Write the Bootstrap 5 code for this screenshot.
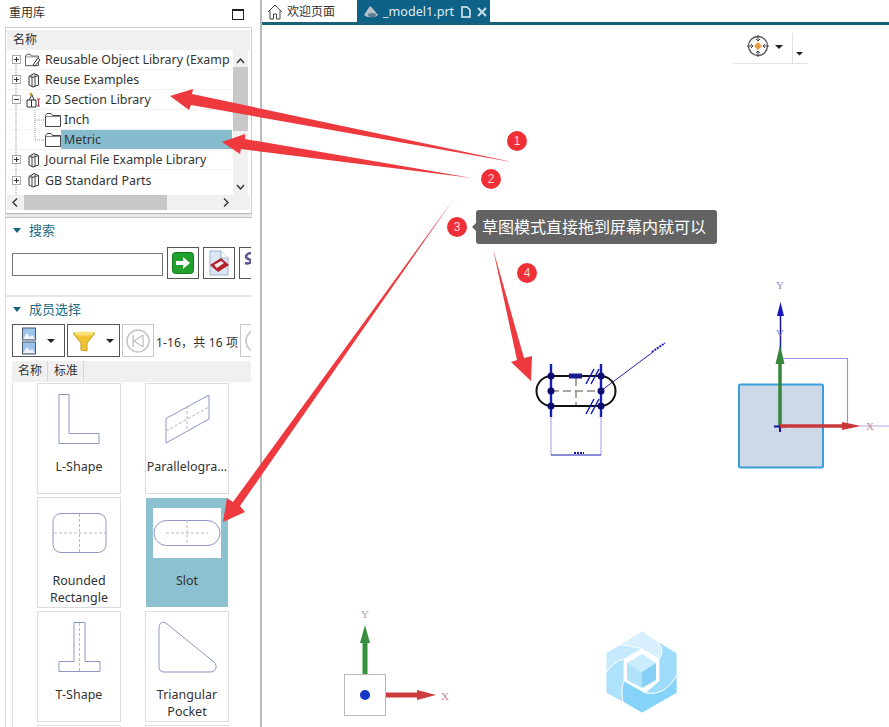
<!DOCTYPE html>
<html lang="zh">
<head>
<meta charset="utf-8">
<title>重用库</title>
<link rel="stylesheet" href="https://cdn.jsdelivr.net/npm/bootstrap@5.3.0/dist/css/bootstrap.min.css">
<style>
html,body{margin:0;height:100%;background:#fff;overflow:hidden}
body{font-family:"Noto Sans","Noto Sans CJK SC",sans-serif;font-size:12px;line-height:20px;color:#333}
.shell{width:889px;height:727px;overflow:hidden;position:relative}
.side{width:260px;height:727px;flex:none;overflow:hidden}
.side-title{height:27px;padding:3px 16px 0 9px}
.max-box{width:12px;height:11px;border:1px solid #222;border-top-width:2px;margin-top:6px}
.tree-wrap{margin-left:5px;width:247px;border:1px solid #d0d0d0;border-bottom:0;height:186px;background:#fff}
.tree-head{height:20px;margin:2px 1px 0;background:#f0f0f0;padding-left:6px;line-height:19px}
.tree-rows{width:226px;height:145px;overflow:hidden;position:relative}
.tree-row{height:20px;border-bottom:1px solid #f2f2f2;white-space:nowrap;line-height:19px;padding:0;border-left:0;border-right:0;border-top:0;background:transparent;color:#333;font-size:12.4px;overflow:hidden}
.tree-row svg{flex:none}
.tree-expander{margin:0 4px 0 6px;z-index:1}
.tree-child{padding-left:39px}
.tree-pick{background:#86bccd;height:20px;padding-left:3px;line-height:19px}
.vbar{width:15px;height:145px;background:#f0f0f0;margin-left:1px}
.vthumb{height:64px;background:#c8c8c8;margin-top:2px}
.hbar{height:15px;margin:0 1px;background:#f0f0f0}
.hthumb{width:143px;height:15px;background:#c8c8c8}
.hchev-end{margin-right:16px}
.gutter{margin-left:5px;height:5px;width:247px;background:#e8e8e8;border-top:1px solid #b8b8b8;border-bottom:1px solid #c4c4c4}
.sect{margin-left:5px;border-left:1px solid #e0e0e0;width:246px;overflow:hidden}
.sect-title{color:#1b6b85;font-size:13px;line-height:18px;gap:8px;padding-left:7px}
.tri{width:0;height:0;border-left:4px solid transparent;border-right:4px solid transparent;border-top:5px solid #14627f}
.search-box{height:79px;padding-top:3px;border-bottom:2px solid #e6e6e6}
.search-row{padding-left:6px;gap:4px;margin-top:8px}
.search-in{width:151px;height:23px;border:1px solid #777;background:#fff;margin-top:6px;flex:none}
.tool-btn{width:32px;height:32px;padding:0;border:1px solid #555;border-radius:0;background:#fff;flex:none;display:flex;align-items:center;justify-content:center}
.tool-off{border-color:#c8c8c8;height:33px}
.tool-clip{justify-content:flex-start;padding-left:4px}
.drop{height:33px;width:53px;padding:0;border:1px solid #555;border-radius:0;background:#fff;flex:none;display:flex;align-items:center;justify-content:center;gap:11px}
.caret-dn{width:0;height:0;border-left:4px solid transparent;border-right:4px solid transparent;border-top:4px solid #222}
.member-sect{height:431px}
.member-title{margin-top:3px}
.member-bar{padding-left:6px;gap:2px;margin-top:6px}
.page-count{margin-top:5px;letter-spacing:.15px}
.mem-tabs{margin-left:6px;height:21px;background:#f0f0f0;margin-top:4px}
.mem-tab{width:36px;text-align:center;border-right:1px solid #d8d8d8;line-height:20px;padding-left:1px}
.mem-grid{margin-left:6px;margin-top:1px;border-left:1px solid #ddd;padding-left:24px;display:grid;grid-template-columns:84px 84px;column-gap:24px;row-gap:3px}
.part-card{height:111px;border:1px solid #ddd;border-radius:0;text-align:center;line-height:17px;font-size:12.5px;background:#fff;overflow:hidden;color:#333;display:block}
.part-card svg{display:block;margin:0 auto}
.part-on{background:#8bc1d1;border-color:#fff}
.main-pane{border-left:2px solid #bbb;height:727px;min-width:0}
.tab-strip{height:23px}
.home-tab{padding-left:5px;width:95px;gap:4px}
.active-tab{width:133px;background:#0e6187;color:#dfeef5;font-size:12.6px;padding-left:6px}
.tab-name{margin-left:4px}
.tab-doc{margin-left:7px}
.tab-close{margin-left:6px}
.strip-line{height:3px;background:#1b6079;margin-top:-1px}
.overlay{position:absolute;left:0;top:0;pointer-events:none}
.pin{position:absolute;width:20px;height:20px;background:#ee2f35;color:#fbd6d6;line-height:20px;text-align:center;font-size:12px;font-family:"Liberation Sans",sans-serif}
.pin-a{left:507px;top:131px}.pin-b{left:481px;top:169px}.pin-c{left:447px;top:217px}.pin-d{left:517px;top:263px}
.tip{position:absolute;left:476px;top:210px;width:241px;height:34px;background:#636363;color:#fff;font-size:16px;line-height:34px;padding-left:6px;border-radius:3px;white-space:nowrap}
.tip::before{content:"";position:absolute;left:-4px;top:13px;border-top:4px solid transparent;border-bottom:4px solid transparent;border-right:4px solid #636363}
.axis-label{font-family:"Liberation Serif",serif;font-size:11px}
.defs-holder{position:absolute}
</style>
</head>
<body>
<svg width="0" height="0" class="defs-holder">
<defs>
<symbol id="plus" viewBox="0 0 9 9"><rect x=".5" y=".5" width="8" height="8" fill="#fff" stroke="#aaa"/><path d="M2 4.500h5M4.500 2v5" stroke="#333"/></symbol>
<symbol id="minus" viewBox="0 0 9 9"><rect x=".5" y=".5" width="8" height="8" fill="#fff" stroke="#aaa"/><path d="M2 4.500h5" stroke="#333"/></symbol>
<symbol id="folder" viewBox="0 0 16 14"><path d="M.5 13.500V2.500L2 .5h4l1.500 2h8v11z" fill="#fff" stroke="#444"/><path d="M.5 3.500h15" stroke="#888"/></symbol>
<symbol id="book" viewBox="0 0 13 16"><path d="M2 4.500 7 1.500l4.500 2v9.500L6 15l-4-2z" fill="#fff" stroke="#333"/><path d="M5 3.500v11M8 2.500v11.500M2 4.500l3.500 1 6-2" fill="none" stroke="#444"/></symbol>
</defs>
</svg>
<div class="shell d-flex">
  <aside class="side">
    <div class="side-title d-flex justify-content-between"><span>重用库</span><span class="max-box"></span></div>
    <div class="tree-wrap">
      <div class="tree-head">名称</div>
      <div class="d-flex">
        <div class="tree-rows list-group list-group-flush rounded-0">
          <svg class="overlay" width="40" height="145"><path d="M10 10V145M29 60V90H38" stroke="#999" stroke-dasharray="1 1" fill="none"/><path d="M29 70H38" stroke="#999" stroke-dasharray="1 1"/></svg>
          <div class="tree-row d-flex align-items-center list-group-item"><svg width="9" height="9" class="tree-expander"><use href="#plus"/></svg><svg width="16" height="16"><use href="#folder" width="14" height="14" y="1"/><path d="M8 13l5-7 2 2-5 6z" fill="#fff" stroke="#333"/></svg><span class="ms-1">Reusable Object Library (Examp</span></div>
          <div class="tree-row d-flex align-items-center list-group-item"><svg width="9" height="9" class="tree-expander"><use href="#plus"/></svg><svg width="16" height="16"><use href="#book" x="2" width="13" height="16"/></svg><span class="ms-1">Reuse Examples</span></div>
          <div class="tree-row d-flex align-items-center list-group-item"><svg width="9" height="9" class="tree-expander"><use href="#minus"/></svg><svg width="18" height="16"><path d="M2 8h9v7H2zM6.500 8v7" fill="#fff" stroke="#333"/><path d="M4 8l3-5 2 5" fill="none" stroke="#333"/><circle cx="6" cy="2" r="1.500" fill="#d09a20"/><path d="M12 7h3M13.500 7v7M12 14h3" stroke="#c0303a"/></svg><span style="margin-left:2px">2D Section Library</span></div>
          <div class="tree-row tree-child d-flex align-items-center list-group-item"><svg width="16" height="14"><use href="#folder"/></svg><span style="margin-left:3px">Inch</span></div>
          <div class="tree-row tree-child d-flex align-items-center list-group-item"><svg width="16" height="14"><use href="#folder"/></svg><span class="tree-pick flex-grow-1">Metric</span></div>
          <div class="tree-row d-flex align-items-center list-group-item"><svg width="9" height="9" class="tree-expander"><use href="#plus"/></svg><svg width="16" height="16"><use href="#book" x="2" width="13" height="16"/></svg><span class="ms-1">Journal File Example Library</span></div>
          <div class="tree-row d-flex align-items-center list-group-item"><svg width="9" height="9" class="tree-expander"><use href="#plus"/></svg><svg width="16" height="16"><use href="#book" x="2" width="13" height="16"/></svg><span class="ms-1">GB Standard Parts</span></div>
        </div>
        <div class="vbar d-flex flex-column">
          <svg width="15" height="17"><path d="M4 13l3.500-4 3.500 4" fill="none" stroke="#333" stroke-width="1.400"/></svg>
          <div class="vthumb mt-0"></div>
          <svg width="15" height="15" class="mt-auto"><path d="M4 5l3.500 4 3.500-4" fill="none" stroke="#333" stroke-width="1.400"/></svg>
        </div>
      </div>
      <div class="hbar d-flex">
        <svg width="17" height="15"><path d="M10 3.500 6 7.500l4 4" fill="none" stroke="#333" stroke-width="1.400"/></svg>
        <div class="hthumb"></div>
        <svg width="15" height="15" class="ms-auto hchev-end"><path d="M5 3.500l4 4-4 4" fill="none" stroke="#333" stroke-width="1.400"/></svg>
      </div>
    </div>
    <div class="gutter"></div>
    <section class="sect search-box">
      <div class="sect-title d-flex align-items-center"><span class="tri"></span><span>搜索</span></div>
      <div class="search-row d-flex">
        <div class="search-in"></div>
        <button class="btn tool-btn" type="button" aria-label="前往"><svg width="22" height="22"><rect x=".5" y=".5" width="21" height="21" rx="3" fill="#22a02e" stroke="#14751d"/><path d="M4 9h7V5l7 6-7 6v-4H4z" fill="#fff"/></svg></button>
        <button class="btn tool-btn" type="button" aria-label="清除"><svg width="22" height="26"><path d="M2 1h11l7 7v17H2z" fill="#dce6f4" stroke="#9fb4cf"/><path d="M13 1v7h7" fill="#fff" stroke="#9fb4cf"/><path d="M2 15l11-7 8 7-11 7z" fill="#b3202c"/><path d="M6 15l7-4 3 2-7 5z" fill="#eee"/></svg></button>
        <button class="btn tool-btn tool-clip" type="button" aria-label="选项"><svg width="14" height="22"><path d="M8 1C4 1 2 3 2 5s5 2 5 4-3 3-6 2" fill="none" stroke="#5b4f96" stroke-width="2.500"/></svg></button>
      </div>
    </section>
    <section class="sect member-sect">
      <div class="sect-title member-title d-flex align-items-center"><span class="tri"></span><span>成员选择</span></div>
      <div class="member-bar d-flex align-items-center">
        <button class="btn drop" type="button" aria-label="视图"><svg width="14" height="28"><rect x=".5" y="1" width="13" height="12" fill="#9cc4ea" stroke="#4a5a70"/><path d="M1 12l4-6 3 4 2-2 3 4z" fill="#f2f6fa"/><rect x=".5" y="15" width="13" height="12" fill="#9cc4ea" stroke="#4a5a70"/><path d="M1 26l4-6 3 4 2-2 3 4z" fill="#f2f6fa"/></svg><span class="caret-dn"></span></button>
        <button class="btn drop" type="button" aria-label="过滤"><svg width="22" height="22"><path d="M0 3h22l-8 10v8l-6-1v-7z" fill="#f1c232" stroke="#c89a1a"/><ellipse cx="11" cy="3.500" rx="10" ry="2" fill="#fbe27a"/></svg><span class="caret-dn"></span></button>
        <button class="btn tool-btn tool-off" type="button" aria-label="上一页"><svg width="24" height="24"><circle cx="12" cy="12" r="11" fill="none" stroke="#c4c4c4" stroke-width="1.500"/><path d="M7 6v12M17 6v12L8 12z" fill="none" stroke="#aaa"/></svg></button>
        <span class="page-count text-nowrap">1-16，共 16 项</span>
        <button class="btn tool-btn tool-off tool-clip ms-auto" type="button" aria-label="下一页"><svg width="10" height="24"><circle cx="12" cy="12" r="11" fill="none" stroke="#c4c4c4" stroke-width="1.500"/></svg></button>
      </div>
      <div class="mem-tabs d-flex"><span class="mem-tab">名称</span><span class="mem-tab">标准</span></div>
      <div class="mem-grid">
        <div class="part-card card"><svg width="84" height="74"><path d="M21 10.500h10v39h30v10H21z" fill="none" stroke="#8f95c4" stroke-linejoin="round"/></svg><div>L-Shape</div></div>
        <div class="part-card card"><svg width="84" height="74"><path d="M20 34.500 63 11v24L20 59z" fill="none" stroke="#8f95c4"/><path d="M20 47 63 23M41 22v26" fill="none" stroke="#b5b5b5" stroke-dasharray="3 2"/></svg><div>Parallelogra...</div></div>
        <div class="part-card card"><svg width="84" height="74"><rect x="15" y="15.500" width="53" height="39" rx="8" fill="none" stroke="#8f95c4"/><path d="M16 35h52M41.500 16v38" stroke="#bbb" stroke-dasharray="3 2"/></svg><div>Rounded<br>Rectangle</div></div>
        <div class="part-card part-on card"><svg width="84" height="74"><rect x="7" y="10" width="68" height="50" fill="#fff"/><rect x="8" y="22.500" width="66" height="25" rx="12.500" fill="none" stroke="#8f95c4"/><path d="M20 35h42M41 22v26" stroke="#bbb" stroke-dasharray="3 2"/></svg><div>Slot</div></div>
        <div class="part-card card"><svg width="84" height="74"><path d="M36 10.500h11v39h15v10H21v-10h15z" fill="none" stroke="#8f95c4" stroke-linejoin="round"/><path d="M41.500 11v48" stroke="#bbb" stroke-dasharray="3 2"/></svg><div>T-Shape</div></div>
        <div class="part-card card"><svg width="84" height="74"><path d="M13 16c0-5 4-8 8-4l47 38c4 4 2 10-4 10H18c-3 0-5-2-5-5z" fill="none" stroke="#8f95c4"/></svg><div>Triangular<br>Pocket</div></div>
        <div class="part-card card"></div>
        <div class="part-card card"></div>
      </div>
    </section>
  </aside>
  <main class="main-pane flex-grow-1">
    <div class="tab-strip d-flex">
      <div class="home-tab d-flex align-items-center"><svg width="16" height="16" class="flex-shrink-0"><path d="M1 8 8 1l7 7M3 6.500V15h3.500v-5h3v5H13V6.500" fill="none" stroke="#444"/></svg><span>欢迎页面</span></div>
      <div class="active-tab d-flex align-items-center">
        <svg width="16" height="14" class="flex-shrink-0"><path d="M1 10 7 1c4 3 6 7 8 9-3 3-11 3-14 0z" fill="#b9c2c8"/><ellipse cx="9" cy="10" rx="4" ry="2" fill="#5c7f92"/></svg>
        <span class="tab-name flex-shrink-0">_model1.prt</span>
        <svg width="10" height="12" class="tab-doc flex-shrink-0"><path d="M1 1h5l3 3v7H1z" fill="none" stroke="#e6f1f6" stroke-width="1.500"/></svg>
        <svg width="10" height="10" class="tab-close flex-shrink-0"><path d="M1 1l8 8M9 1l-8 8" stroke="#c5dde8" stroke-width="2"/></svg>
      </div>
    </div>
    <div class="strip-line"></div>
    <svg width="627" height="702" viewBox="262 25 627 702" class="d-block">
      <path d="M733 63.500h75" stroke="#e2e2e2"/><path d="M792.500 33v30" stroke="#e2e2e2"/>
      <circle cx="758" cy="46" r="9.500" fill="#fff" stroke="#555" stroke-width="1.300"/>
      <path d="M758 35v6M758 51v6M747 46h6M763 46h6M756 39l2 2 2-2M756 53l2-2 2 2M751 44l2 2-2 2M765 44l-2 2 2 2" fill="none" stroke="#444"/>
      <path d="M758 42l4 4-4 4-4-4z" fill="#e79a3c"/>
      <path d="M775 45h8l-4 4zM796 52h7l-3.500 3.500z" fill="#222"/>

      <path d="M551 417V455M601 417V455" stroke="#b4b8e8" stroke-width="1.300"/>
      <path d="M551 455h50" stroke="#1a1ab0" stroke-width="1.200"/>
      <path d="M574 453h10" stroke="#1a1ab0" stroke-width="2" stroke-dasharray="2 1"/>
      <path d="M602 390 653 352" stroke="#2020b0"/>
      <path d="M652 352 665 343" stroke="#2020b0" stroke-width="2" stroke-dasharray="2 1"/>
      <path d="M551 391h50M576 378v28" stroke="#8a8a80" stroke-width="1.500" stroke-dasharray="8 4"/>
      <rect x="536.500" y="376" width="79" height="30" rx="15" fill="none" stroke="#111" stroke-width="2"/>
      <rect x="569" y="373.500" width="13" height="5" fill="#1a1a90"/>
      <path d="M551 364v53M601 364v53" stroke="#1420b4" stroke-width="2.400"/>
      <g fill="#0b0b70"><circle cx="551" cy="376" r="3.500"/><circle cx="601" cy="376" r="3.500"/><circle cx="551" cy="391" r="3.500"/><circle cx="601" cy="391" r="3.500"/><circle cx="551" cy="406" r="3.500"/><circle cx="601" cy="406" r="3.500"/></g>
      <path d="M586 384l8-15M591 384l8-15M586 414l8-15M591 414l8-15" stroke="#1420b4" stroke-width="1.500"/>

      <rect x="739" y="384.500" width="84" height="83" rx="1.500" fill="#cdd9e6" stroke="#3b9ed8" stroke-width="2"/>
      <path d="M780 358.500H847.500V426" fill="none" stroke="#9a90de" stroke-width="1.200"/>
      <path d="M860 426h29" stroke="#c4b6e8" stroke-width="1.200"/>
      <path d="M780.500 350V310" stroke="#1414a0" stroke-width="1.500"/>
      <path d="M780.500 302l3.500 14h-7z" fill="#1616c0"/>
      <path d="M780 427V362" stroke="#35853a" stroke-width="3.500"/>
      <path d="M780 345l4.500 19h-9z" fill="#35853a"/>
      <path d="M774 426.500h12M780 426v6" stroke="#1414a0" stroke-width="2"/>
      <path d="M780 426h70" stroke="#c8383c" stroke-width="3.500"/>
      <path d="M861 426l-19-4v8z" fill="#c8383c"/>
      <text x="780" y="289" class="axis-label" text-anchor="middle" fill="#8a8ac8">Y</text>
      <text x="780" y="337" class="axis-label" text-anchor="middle" fill="#8a8ac8">V</text>
      <text x="870" y="430" class="axis-label" text-anchor="middle" fill="#c88a9a">X</text>

      <rect x="344.500" y="674.500" width="41" height="41" fill="#fff" stroke="#bbb"/>
      <circle cx="365" cy="695" r="5" fill="#1438c8"/>
      <path d="M365 674V640" stroke="#38903e" stroke-width="5"/>
      <path d="M365 625l5 18h-10z" fill="#38903e"/>
      <path d="M386 695h35" stroke="#cc3c3c" stroke-width="5"/>
      <path d="M436 695l-19-5v10z" fill="#cc3c3c"/>
      <text x="365" y="618" class="axis-label" text-anchor="middle" fill="#a0a0a0">Y</text>
      <text x="445" y="700" class="axis-label" text-anchor="middle" fill="#c88a8a">X</text>

      <g stroke="#fff" stroke-width=".8">
        <path d="M642 631 657 641Q666 650 659 659L642 649Q630 645 619 645z" fill="#d8f0fe"/>
        <path d="M657 641 677 653V675Q665 697 645 693L659 681V659Q666 650 657 641z" fill="#9edcfb"/>
        <path d="M677 675V693L642 713 623 702Q620 690 624 681L642 691 645 693Q665 697 677 675z" fill="#86d3fa"/>
        <path d="M606 673Q612 662 624 659V681Q620 690 623 702L606 693z" fill="#aee1fb"/>
        <path d="M606 653 619 645Q630 645 642 649L624 659Q612 662 606 673z" fill="#c6eafd"/>
      </g>
      <path d="M642 649 659 659V681L642 691 624 681V659z" fill="#fff"/>
      <path d="M642 654 656 663 642 672 627 663z" fill="#c9edfe"/>
      <path d="M627 663 642 672V688L627 680z" fill="#b0e2fb"/>
      <path d="M656 663 642 672V688L656 680z" fill="#86d0f5"/>
    </svg>
  </main>

  <svg class="overlay" width="889" height="727" aria-hidden="true">
    <g fill="#ee3a3f">
      <polygon points="512,162 192,94 193,89 170,96 189,110 191,105"/>
      <polygon points="472,178 245,139 245,134 222,142 240,154 241,149"/>
      <polygon points="453,200 240,506 245,512 223,522 227,498 233,502"/>
      <polygon points="493,249 524,358 532,356 531,381 511,362 517,360"/>
    </g>
  </svg>
  <span class="pin pin-a rounded-circle">1</span>
  <span class="pin pin-b rounded-circle">2</span>
  <span class="pin pin-c rounded-circle">3</span>
  <span class="pin pin-d rounded-circle">4</span>
  <div class="tip">草图模式直接拖到屏幕内就可以</div>
</div>
<script src="https://cdn.jsdelivr.net/npm/bootstrap@5.3.0/dist/js/bootstrap.bundle.min.js"></script>
</body>
</html>
